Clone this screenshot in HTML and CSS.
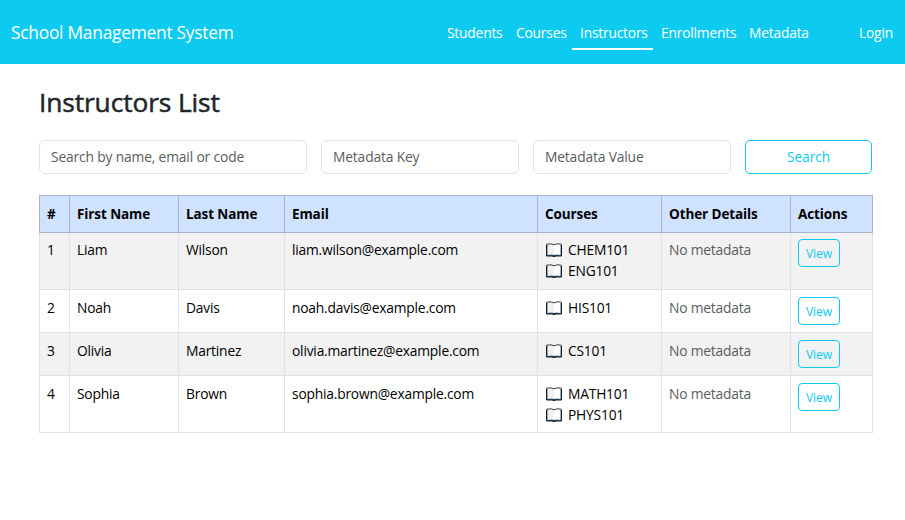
FILE: index.html
```html
<!DOCTYPE html>
<html lang="en">
<head>
<meta charset="utf-8">
<title>Instructors List</title>
<link rel="stylesheet" href="styles.css">
</head>
<body>
<svg class="sprite" aria-hidden="true">
  <symbol id="book" viewBox="0 0 16 14">
    <path d="M.5 1.7V13H15.5V1.7" fill="#2f6386" stroke="#111c25"/>
    <path d="M1.5 1.3Q6.5.3 8 1.8V12Q6.5 11.2 1.5 12Z" fill="#f1f1f1"/>
    <path d="M14.5 1.3Q9.5.3 8 1.8V12Q9.5 11.2 14.5 12Z" fill="#fff"/>
    <path d="M.5 1.2Q6 .2 8 1.8Q10 .2 15.5 1.2" fill="none" stroke="#3b3b3b"/>
    <path d="M6.5 13.2Q8 13.9 9.5 13.2" fill="none" stroke="#111c25"/>
  </symbol>
</svg>
<header class="navbar">
  <a class="brand">School Management System</a>
  <nav class="nav">
    <a class="link students">Students</a>
    <a class="link courses">Courses</a>
    <a class="link active">Instructors</a>
    <a class="link enrollments">Enrollments</a>
    <a class="link metadata">Metadata</a>
    <a class="link login">Login</a>
  </nav>
</header>
<main class="container">
  <h1>Instructors List</h1>
  <form class="filters">
    <input type="text" placeholder="Search by name, email or code">
    <input type="text" placeholder="Metadata Key">
    <input type="text" placeholder="Metadata Value">
    <button class="btn" type="button">Search</button>
  </form>
  <table>
    <colgroup><col class="c1"><col class="c2"><col class="c3"><col class="c4"><col class="c5"><col class="c6"><col class="c7"></colgroup>
    <thead>
      <tr><th>#</th><th>First Name</th><th>Last Name</th><th>Email</th><th>Courses</th><th>Other Details</th><th>Actions</th></tr>
    </thead>
    <tbody>
      <tr class="tall"><td>1</td><td>Liam</td><td>Wilson</td><td>liam.wilson@example.com</td>
        <td><div class="course"><svg><use href="#book"/></svg>CHEM101</div><div class="course"><svg><use href="#book"/></svg>ENG101</div></td>
        <td class="muted">No metadata</td><td><button class="btn small" type="button">View</button></td></tr>
      <tr><td>2</td><td>Noah</td><td>Davis</td><td>noah.davis@example.com</td>
        <td><div class="course"><svg><use href="#book"/></svg>HIS101</div></td>
        <td class="muted">No metadata</td><td><button class="btn small" type="button">View</button></td></tr>
      <tr><td>3</td><td>Olivia</td><td>Martinez</td><td>olivia.martinez@example.com</td>
        <td><div class="course"><svg><use href="#book"/></svg>CS101</div></td>
        <td class="muted">No metadata</td><td><button class="btn small" type="button">View</button></td></tr>
      <tr class="tall"><td>4</td><td>Sophia</td><td>Brown</td><td>sophia.brown@example.com</td>
        <td><div class="course"><svg><use href="#book"/></svg>MATH101</div><div class="course"><svg><use href="#book"/></svg>PHYS101</div></td>
        <td class="muted">No metadata</td><td><button class="btn small" type="button">View</button></td></tr>
    </tbody>
  </table>
</main>
</body>
</html>
```

FILE: styles.css
```css
* { box-sizing: border-box; }
body { margin: 0; background: #fff; color: #000; font-family: "Open Sans", "Noto Sans", sans-serif; font-size: 13.8px; letter-spacing: -0.2px; line-height: 21.4px; }
.sprite { display: none; }
.navbar { height: 64px; background: #0dcaf0; color: #fff; display: flex; align-items: center; justify-content: space-between; padding: 0 11px; }
.brand { font-size: 17.4px; letter-spacing: -0.27px; line-height: 27px; padding-top: 1px; white-space: nowrap; }
.nav { display: flex; }
.link { height: 35px; padding-top: 7px; border-bottom: 2px solid transparent; white-space: nowrap; }
.students { width: 69px; }
.courses { width: 56px; }
.active { width: 81px; padding-left: 8px; border-bottom-color: #fff; }
.enrollments { width: 96px; padding-left: 8px; }
.metadata { width: 110px; }
.login { width: 35px; }
.container { margin-left: 39px; width: 833px; padding-top: 21px; }
h1 { margin: 0; height: 55px; font-size: 26.3px; letter-spacing: -0.1px; line-height: 34px; font-weight: 500; color: #212529; -webkit-text-stroke: 0.5px #212529; }
.filters { display: grid; grid-template-columns: 268px 198px 198px 127px; gap: 14px; margin: 0 0 21px; height: 34px; }
input { min-width: 0; border: 1px solid #dee2e6; border-radius: 6px; padding: 0 11px; font: inherit; letter-spacing: -0.15px; color: #212529; }
input::placeholder { color: #595c5f; opacity: 1; }
.btn { border: 1px solid #0dcaf0; border-radius: 5px; padding: 0; background: transparent; color: #0dcaf0; font: inherit; letter-spacing: -0.1px; }
.small { display: block; width: 42px; height: 28px; border-radius: 4px; padding-top: 1px; font-size: 12.2px; }
table { width: 833px; table-layout: fixed; border-collapse: collapse; }
.c1 { width: 30px; } .c2 { width: 109px; } .c3 { width: 106px; } .c4 { width: 253px; }
.c5 { width: 124px; } .c6 { width: 129px; } .c7 { width: 82px; }
th, td { padding: 7px 7px 0; border: 1px solid #dee2e6; text-align: left; vertical-align: top; white-space: nowrap; }
th { height: 37px; padding-top: 8px; background: #cfe2ff; border-color: #a6b5cc; font-size: 13.5px; font-weight: 700; letter-spacing: -0.1px; }
td { height: 43px; }
.tall td { height: 57px; }
.tall:first-child td { padding-top: 6px; }
tbody tr:nth-child(odd) { background: #f2f2f2; }
.muted { color: #595c5f; }
.course { display: flex; align-items: center; }
.course svg { width: 16px; height: 14px; margin: 0 6px 0 1px; }
```
